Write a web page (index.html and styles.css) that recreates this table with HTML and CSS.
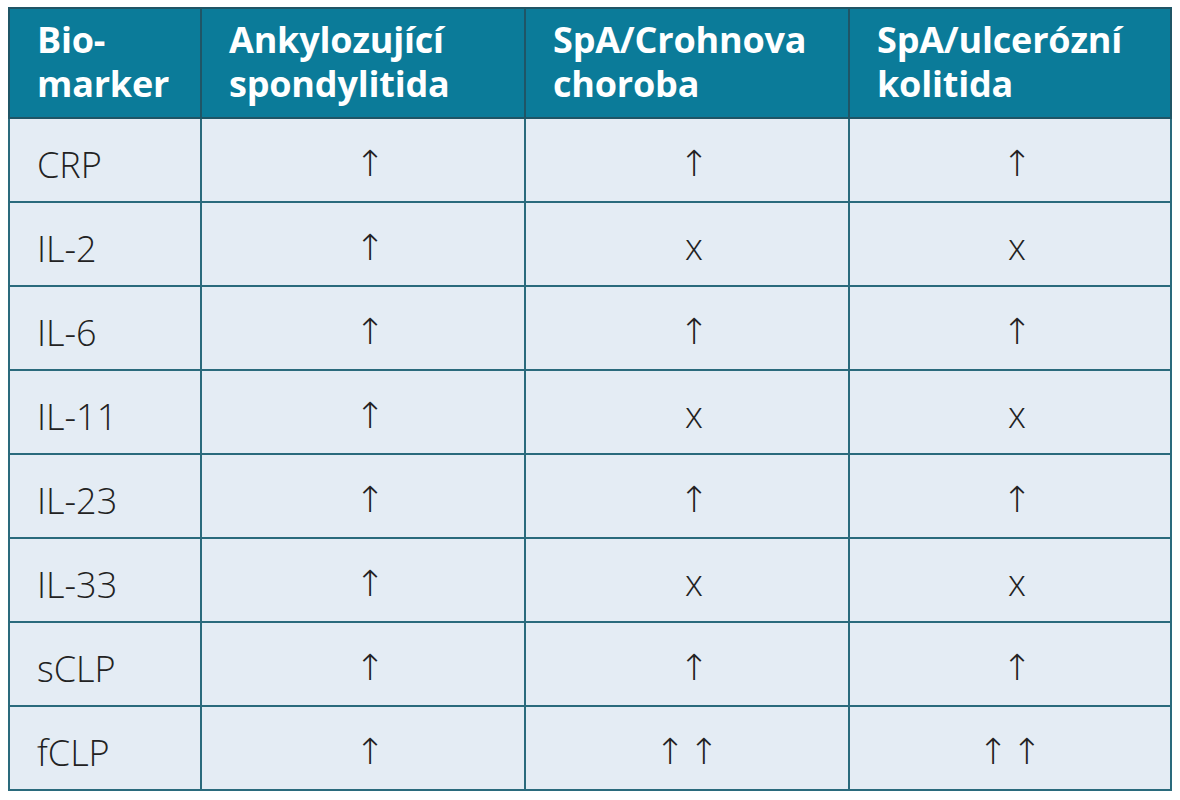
FILE: index.html
```html
<!DOCTYPE html>
<html lang="cs">
<head>
<meta charset="utf-8">
<link rel="stylesheet" href="styles.css">
</head>
<body>
<table class="bio">
  <colgroup>
    <col class="c1"><col class="c2"><col class="c3"><col class="c4">
  </colgroup>
  <thead>
    <tr>
      <th>Bio-<br>marker</th>
      <th>Ankylozující<br>spondylitida</th>
      <th>SpA/Crohnova<br>choroba</th>
      <th>SpA/ulcerózní<br>kolitida</th>
    </tr>
  </thead>
  <tbody>
    <tr><td>CRP</td><td class="v">↑</td><td class="v">↑</td><td class="v">↑</td></tr>
    <tr><td>IL-2</td><td class="v">↑</td><td class="v x">x</td><td class="v x">x</td></tr>
    <tr><td>IL-6</td><td class="v">↑</td><td class="v">↑</td><td class="v">↑</td></tr>
    <tr><td>IL-11</td><td class="v">↑</td><td class="v x">x</td><td class="v x">x</td></tr>
    <tr><td>IL-23</td><td class="v">↑</td><td class="v">↑</td><td class="v">↑</td></tr>
    <tr><td>IL-33</td><td class="v">↑</td><td class="v x">x</td><td class="v x">x</td></tr>
    <tr><td>sCLP</td><td class="v">↑</td><td class="v">↑</td><td class="v">↑</td></tr>
    <tr><td>fCLP</td><td class="v">↑</td><td class="v dbl">↑ ↑</td><td class="v dbl">↑ ↑</td></tr>
  </tbody>
</table>
</body>
</html>
```
FILE: styles.css
```css
html, body {
  margin: 0;
  padding: 0;
  background: #ffffff;
}
body {
  padding: 7px 0 0 8px;
  font-family: "Open Sans", "Liberation Sans", sans-serif;
}
.bio {
  border-collapse: collapse;
  table-layout: fixed;
  width: 1162px;
}
.c1 { width: 192px; }
.c2 { width: 324px; }
.c3 { width: 324px; }
.c4 { width: 322px; }
.bio th {
  background: #0b7b99;
  color: #ffffff;
  font-weight: 700;
  font-size: 36px;
  line-height: 44px;
  text-align: left;
  vertical-align: middle;
  height: 110px;
  padding: 0 0 2px 27px;
  box-sizing: border-box;
  border: 2px solid #1f5566;
  letter-spacing: -0.2px;
}
.bio td {
  background: #e4ecf4;
  color: #222222;
  font-size: 36px;
  font-weight: 300;
  height: 84px;
  padding: 8px 0 0 27px;
  box-sizing: border-box;
  border: 2px solid #2a6a7c;
  vertical-align: middle;
}
.bio td.v {
  text-align: center;
  padding: 6px 0 0 14px;
  font-family: "DejaVu Sans", sans-serif;
  font-weight: 200;
  font-size: 36px;
}
.bio td.dbl {
  padding-left: 0;
  word-spacing: -8px;
}
.bio td.x {
  font-family: "Open Sans", sans-serif;
  font-weight: 300;
  font-size: 36px;
  padding-top: 4px;
}
```
